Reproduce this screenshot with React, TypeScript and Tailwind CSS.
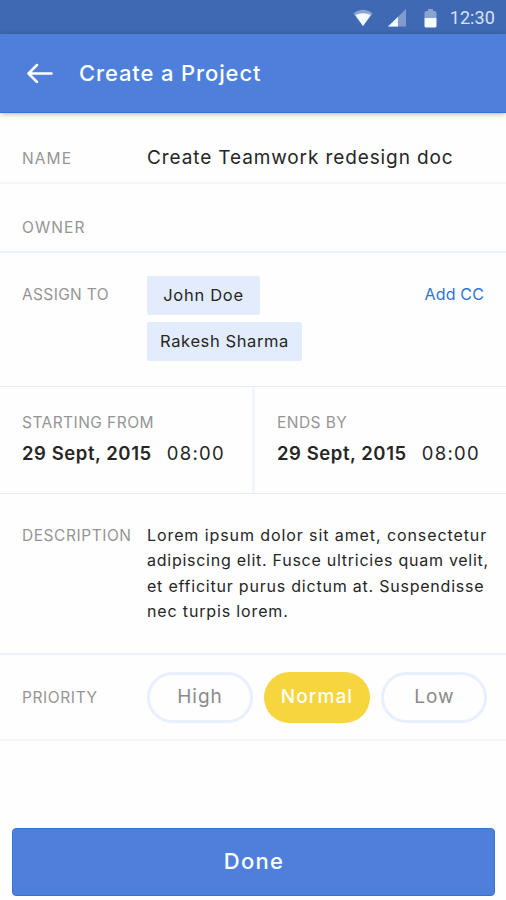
import type { ReactNode } from "react";

function Label({ children, className = "" }: { children: ReactNode; className?: string }) {
  return (
    <span className={`text-[15.5px] leading-5 whitespace-nowrap text-[#959595] ${className}`}>{children}</span>
  );
}

function StatusBar() {
  return (
    <div className="flex h-[34px] items-center justify-end bg-[#4069b3] pt-[2px] pr-[11px]">
      <svg className="mr-[15px] h-[18px] w-[20px]" viewBox="0 0 20 18">
        <path d="M0.5 4.5Q10 -3 19.5 4.5L10 17Z" fill="#8ba5d3" />
        <path d="M2.2 6Q10 2.500 17.8 6L10 17Z" fill="#f4fbff" />
      </svg>
      <svg className="mr-[18px] h-[18px] w-[18px]" viewBox="0 0 18 18">
        <path d="M0 17.5L18 0V17.5Z" fill="#7f9bcf" />
        <path d="M0 17.5L10 8V17.5Z" fill="#f4fbff" />
      </svg>
      <svg className="mr-[13px] h-[19px] w-[13px]" viewBox="0 0 13 19">
        <path d="M0.5 9V4Q0.5 2 2.5 2H4V0H9V2H10.500Q12.500 2 12.500 4V9Z" fill="#8ba5d3" />
        <path d="M0.5 9H12.500V17Q12.500 18.500 11 18.500H2Q0.5 18.500 0.5 17Z" fill="#f4fbff" />
      </svg>
      <span className="font-[Roboto] text-[18px] leading-5 tracking-[0.1px] text-[#d5e1f7]">12:30</span>
    </div>
  );
}

function DateCell({ label, className = "" }: { label: string; className?: string }) {
  return (
    <div className={`flex flex-col pt-[26px] ${className}`}>
      <Label className="tracking-[0.45px]">{label}</Label>
      <div className="mt-[8px] flex gap-[15px] text-[18.5px] leading-6 whitespace-nowrap text-[#262626]">
        <span className="font-semibold tracking-[0.56px]">29 Sept, 2015</span>
        <span className="tracking-[1.3px]">08:00</span>
      </div>
    </div>
  );
}

export default function App() {
  return (
    <div className="flex h-[900px] w-[506px] flex-col overflow-hidden bg-[#fefefe] font-[Inter,sans-serif] text-[#262626]">
      <StatusBar />
      <header className="flex h-[79px] shrink-0 items-center border-b border-[#3a72cf] bg-[#4e80db] pl-[27px] text-white shadow-[0_1px_5px_rgba(0,0,0,0.3)]">
        <svg className="h-[20px] w-[26px]" viewBox="0 0 26 20" fill="none" stroke="currentColor" strokeWidth="2.5" strokeLinecap="round" strokeLinejoin="round">
          <path d="M24.500 10.500H1.500M10 2L1.500 10.500L10 19" />
        </svg>
        <h1 className="ml-[26px] text-[22px] leading-7 font-medium tracking-[0.87px]">Create a Project</h1>
      </header>

      <div className="flex h-[71px] shrink-0 items-center border-b-2 border-[#f2f5fe] pt-[20px] pl-[22px]">
        <Label className="w-[125px] pt-[2px] tracking-[1.1px]">NAME</Label>
        <span className="text-[19px] leading-6 tracking-[0.89px] whitespace-nowrap">Create Teamwork redesign doc</span>
      </div>

      <div className="flex h-[69px] shrink-0 items-center border-b-2 border-[#edf2fe] pt-[20px] pl-[22px]">
        <Label className="tracking-[1.1px]">OWNER</Label>
      </div>

      <div className="flex h-[134px] shrink-0 items-start border-b border-[#e3eafd] pr-[22px] pl-[22px] pt-[23px]">
        <Label className="mt-[9px] w-[125px] shrink-0 tracking-[0.35px]">ASSIGN TO</Label>
        <div className="flex flex-1 flex-col items-start gap-[7px]">
          <span className="flex h-[39px] w-[113px] items-center justify-center rounded-[2px] bg-[#e3ecfc] text-[16.500px] tracking-[0.7px]">John Doe</span>
          <span className="flex h-[39px] w-[155px] items-center justify-center rounded-[2px] bg-[#e3ecfc] text-[16.500px] tracking-[0.6px]">Rakesh Sharma</span>
        </div>
        <span className="mt-[8px] text-[16px] leading-5 tracking-[0.15px] text-[#2f73d8]">Add CC</span>
      </div>

      <div className="flex h-[107px] shrink-0 border-b border-[#e3eafd]">
        <DateCell label="STARTING FROM" className="w-[255px] border-r-[3px] border-[#f3f6fe] pl-[22px]" />
        <DateCell label="ENDS BY" className="flex-1 pl-[22px]" />
      </div>

      <div className="flex h-[161px] shrink-0 items-start border-b-2 border-[#edf2fe] pt-[29px] pl-[22px]">
        <Label className="mt-[3px] w-[125px] shrink-0 tracking-[0.55px]">DESCRIPTION</Label>
        <p className="flex flex-col text-[16px] leading-[25.300px] whitespace-nowrap">
          <span className="tracking-[0.91px]">Lorem ipsum dolor sit amet, consectetur</span>
          <span className="tracking-[0.74px]">adipiscing elit. Fusce ultricies quam velit,</span>
          <span className="tracking-[0.78px]">et efficitur purus dictum at. Suspendisse</span>
          <span className="tracking-[0.85px]">nec turpis lorem.</span>
        </p>
      </div>

      <div className="flex h-[86px] shrink-0 items-center border-b-2 border-[#f2f5fe] pt-[1px] pl-[22px]">
        <Label className="w-[125px] shrink-0 tracking-[0.6px]">PRIORITY</Label>
        <div className="flex gap-[11px] text-[19px] leading-6 text-[#8a8a8a]">
          <button className="h-[51px] w-[106px] rounded-full border-[3px] border-[#e8effd] pb-[2px] tracking-[1px]">High</button>
          <button className="h-[51px] w-[106px] rounded-full bg-[#f7d53e] pb-[2px] font-medium tracking-[1.1px] text-white">Normal</button>
          <button className="h-[51px] w-[106px] rounded-full border-[3px] border-[#e8effd] pb-[2px] pl-[1px] tracking-[1px]">Low</button>
        </div>
      </div>

      <button className="mx-[12px] mt-[87px] h-[68px] w-[483px] shrink-0 rounded-[4px] border border-[#3a72cf] bg-[#4e80db] pb-[2px] pl-[1px] text-[22px] font-medium tracking-[1.3px] text-white">
        Done
      </button>
    </div>
  );
}
